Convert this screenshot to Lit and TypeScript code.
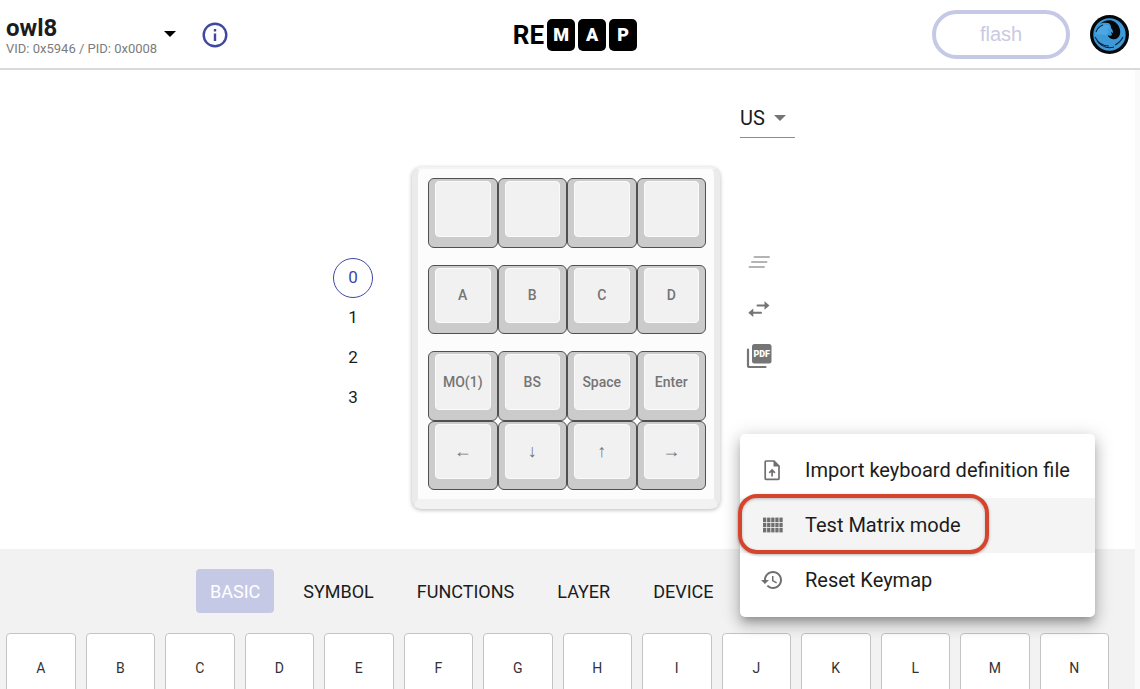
import { LitElement, html, css, svg } from "lit";
import { customElement, state } from "lit/decorators.js";
import { classMap } from "lit/directives/class-map.js";

const KEY_ROWS: { labels: string[]; spaced: boolean; arrows: boolean }[] = [
  { labels: ["", "", "", ""], spaced: false, arrows: false },
  { labels: ["A", "B", "C", "D"], spaced: true, arrows: false },
  { labels: ["MO(1)", "BS", "Space", "Enter"], spaced: true, arrows: false },
  { labels: ["←", "↓", "↑", "→"], spaced: false, arrows: true },
];
const TABS = ["BASIC", "SYMBOL", "FUNCTIONS", "LAYER", "DEVICE"];
const LETTERS = "ABCDEFGHIJKLMN".split("");

const fileIcon = svg`
  <path d="M6 3h8l5 5v12.500a.8.8 0 0 1-.8.800H6a.8.8 0 0 1-.8-.8V3.800A.8.8 0 0 1 6 3z" fill="none" stroke="currentColor" stroke-width="1.700"/>
  <path d="M13.500 2.500v6h6z" fill="currentColor"/>
  <path d="M12.100 18.500v-6M9.300 14.800l2.800-2.800 2.800 2.800" fill="none" stroke="currentColor" stroke-width="1.700"/>`;
const gridIcon = svg`${[0, 1, 2].map((r) =>
  [0, 1, 2, 3, 4].map((c) => svg`<rect x=${3 + c * 4.1} y=${4.6 + r * 5.2} width="3.300" height="4.400" fill="currentColor"/>`)
)}`;
const historyIcon = svg`
  <path d="M13 3c-4.970 0-9 4.030-9 9H1l3.890 3.890.07.14L9 12H6c0-3.870 3.130-7 7-7s7 3.130 7 7-3.130 7-7 7c-1.930 0-3.680-.79-4.940-2.060l-1.420 1.420C8.270 19.990 10.510 21 13 21c4.970 0 9-4.030 9-9s-4.030-9-9-9zm-1 5v5l4.280 2.540.72-1.210-3.500-2.080V8H12z" fill="currentColor"/>`;

@customElement("app-root")
export class AppRoot extends LitElement {
  @state() private layer = 0;
  @state() private tab = "BASIC";

  static styles = css`
    :host {
      display: flex;
      flex-direction: column;
      position: relative;
      height: 100vh;
      overflow: hidden;
      background: #fafafa;
      color: #1c1c1c;
      font-family: Roboto, "Noto Sans", sans-serif;
    }
    * { box-sizing: border-box; }
    button {
      font: inherit;
      color: inherit;
      border: 0;
      padding: 0;
      margin: 0;
      background: none;
      cursor: pointer;
    }
    svg { display: block; }
    header {
      display: grid;
      grid-template-columns: 1fr auto 1fr;
      align-items: center;
      height: 70px;
      flex: none;
      padding: 0 11px 0 6px;
      background: #fff;
      border-bottom: 2px solid #dadada;
    }
    .device { display: flex; align-items: center; }
    .picker { display: flex; align-items: center; gap: 7px; text-align: left; }
    .name { display: block; font-size: 24px; font-weight: 700; line-height: 28px; padding-top: 2px; }
    .ids { display: block; font-size: 13px; line-height: 14px; color: #7c7c7c; }
    .info { margin: 2px 0 0 26px; color: #3f48a0; }
    .logo { display: flex; align-items: center; gap: 3px; padding: 2px 0 0 15px; color: #000; }
    .logo-re {
      font-weight: 700;
      font-size: 26px;
      line-height: 32px;
    }
    .logo-cap {
      width: 28px;
      height: 32px;
      border-radius: 5px;
      background: #000;
      color: #fff;
      text-align: center;
      font-weight: 900;
      font-size: 18px;
      line-height: 32px;
    }
    .account { display: flex; align-items: center; justify-content: flex-end; gap: 20px; }
    .flash {
      width: 138px;
      height: 49px;
      border: 4px solid #c6c9e6;
      border-radius: 25px;
      color: #c8cae4;
      font-family: "Liberation Sans", Arial, sans-serif;
      font-size: 20px;
    }
    .content { flex: 1; display: flex; flex-direction: column; margin-right: 5px; }
    .stage {
      display: grid;
      grid-template-columns: 1fr 308px 1fr;
      padding: 28px 3px 40px 0;
      background: #fff;
    }
    .layers {
      display: flex;
      flex-direction: column;
      align-items: center;
      justify-self: end;
      margin: 160px 39px 0 0;
    }
    .layer { width: 40px; height: 40px; padding-bottom: 2px; border-radius: 50%; font-size: 17px; }
    .layer.on { border: 1px solid #3f48a0; color: #3f48a0; }
    .board {
      margin-top: 69px;
      padding: 9px 8px 9px 10px;
      border: solid #ebebeb;
      border-width: 2px 6px 10px;
      border-bottom-color: #f2f2f2;
      border-top-color: #f4f4f4;
      border-radius: 9px;
      background: #fcfcfc;
      box-shadow: 0 1px 4px rgba(0, 0, 0, 0.28);
    }
    .row { display: grid; grid-template-columns: repeat(4, 1fr); }
    .row.spaced { margin-top: 17px; }
    .key {
      display: flex;
      aspect-ratio: 1;
      padding: 2px 6px 10px;
      border: 1px solid #505050;
      border-radius: 6px;
      background: #cbcbcb;
      color: #757575;
      font-size: 14px;
      font-weight: 500;
    }
    .arrows .key { font-size: 18px; font-weight: 400; }
    .top {
      flex: 1;
      display: flex;
      align-items: center;
      justify-content: center;
      border: 1px solid #fafafa;
      border-radius: 4px;
      background: #f1f1f1;
    }
    .tools { display: flex; flex-direction: column; align-items: flex-start; margin-left: 20px; }
    .layout { display: grid; width: 55px; border-bottom: 1px solid #8c8c8c; align-items: center; }
    .layout select {
      grid-area: 1 / 1;
      appearance: none;
      height: 39px;
      border: 0;
      padding: 0;
      background: none;
      color: inherit;
      font: inherit;
      font-size: 20px;
    }
    .layout svg { grid-area: 1 / 1; justify-self: end; margin-right: 9px; pointer-events: none; }
    .actions { display: flex; flex-direction: column; margin-top: 100px; }
    .action { display: grid; place-items: center; width: 38px; height: 47px; color: #757575; }
    .action:disabled { color: #b4b4b4; }
    .palette { flex: 1; padding: 20px 26px 0 6px; background: #f2f2f2; }
    .tabs { display: flex; gap: 15px; padding-left: 190px; }
    .tab { height: 44px; padding: 0 14px; border-radius: 4px; font-size: 18px; }
    .tab.on { background: #c6c9e6; color: #fff; }
    .letters { display: grid; grid-template-columns: repeat(14, 1fr); gap: 10px; margin-top: 20px; }
    .letter {
      height: 70px;
      border: 1px solid #c4c4c4;
      border-radius: 4px;
      background: #fff;
      font-size: 14px;
      color: #333;
    }
    .menu {
      position: absolute;
      top: 434px;
      right: 45px;
      width: 355px;
      padding: 9px 0;
      border-radius: 5px;
      background: #fff;
      box-shadow: 0 6px 7px -3px rgba(0, 0, 0, 0.22), 0 8px 14px 1px rgba(0, 0, 0, 0.16),
        0 3px 18px 3px rgba(0, 0, 0, 0.13);
    }
    .item {
      display: flex;
      align-items: center;
      gap: 21px;
      width: 100%;
      height: 55px;
      padding: 0 0 2px 20px;
      font-size: 20px;
      white-space: nowrap;
    }
    .item svg { color: #6f6f6f; }
    .item.on { background: #f4f4f4; }
    .callout {
      position: absolute;
      top: 60px;
      left: -2px;
      width: 251px;
      height: 60px;
      border: 4px solid #d4452e;
      border-radius: 19px;
      box-shadow: 0 1px 3px rgba(0, 0, 0, 0.3), inset 0 1px 3px rgba(0, 0, 0, 0.25);
      pointer-events: none;
    }
  `;

  private header() {
    return html`<header>
      <div class="device">
        <button class="picker">
          <span><span class="name">owl8</span><span class="ids">VID: 0x5946 / PID: 0x0008</span></span>
          <svg width="12" height="6" viewBox="0 0 12 6"><path d="M0 0h12L6 6z" /></svg>
        </button>
        <button class="info" aria-label="Information">
          <svg width="26" height="26" viewBox="0 0 26 26" fill="none" stroke="currentColor" stroke-width="2.400">
            <circle cx="13" cy="13" r="11.300" />
            <path d="M13 11.500v7.500M13 7v2.500" />
          </svg>
        </button>
      </div>
      <div class="logo" role="img" aria-label="REMAP">
        <span class="logo-re">RE</span>
        ${["M", "A", "P"].map((c) => html`<span class="logo-cap">${c}</span>`)}
      </div>
      <div class="account">
        <button class="flash" disabled>flash</button>
        <button aria-label="Account">
          <svg width="39" height="39" viewBox="0 0 39 39">
            <circle cx="19.500" cy="19.500" r="19.500" fill="#05070b" />
            <circle cx="19.500" cy="19.500" r="16.200" fill="#3d9ad8" />
            <path d="M10 9c4-4 11-5 15-2 4 3 6 8 5 12-1 4-4 6-8 5-2-.5-4-2-4-4 1 1 3 1 4 0l-1-3 2 1c0-2-.5-4-2-5 0-3-1-5-4-5-3-.5-5 0-7 1z" fill="#05070b" />
            <path d="M6 19c0-4 3-8 8-9 3-1 5 0 7 3l-4 1 2 3-3 3c-4 0-7-1-10-1z" fill="#4ba6e2" />
            <path d="M5 22c3 6 8 9 14 9M7 26c4 5 10 8 17 6M6 17c1-3 4-6 7-7M25 30c4-2 6-4 8-8" fill="none" stroke="#0a2440" stroke-width="1.100" />
          </svg>
        </button>
      </div>
    </header>`;
  }

  private stage() {
    return html`<section class="stage">
      <div class="layers">
        ${[0, 1, 2, 3].map(
          (n) => html`<button class=${classMap({ layer: true, on: n === this.layer })} @click=${() => (this.layer = n)}>${n}</button>`
        )}
      </div>
      <div class="board">
        ${KEY_ROWS.map(
          (row) => html`<div class=${classMap({ row: true, spaced: row.spaced, arrows: row.arrows })}>
            ${row.labels.map((l) => html`<button class="key" aria-label=${l || "Empty key"}><span class="top">${l}</span></button>`)}
          </div>`
        )}
      </div>
      <div class="tools">
        <label class="layout">
          <select aria-label="Keyboard layout"><option>US</option></select>
          <svg width="12" height="6" viewBox="0 0 12 6"><path d="M0 0h12L6 6z" fill="#757575" /></svg>
        </label>
        <div class="actions">
          <button class="action" disabled aria-label="Clear all changes">
            <svg width="24" height="16" viewBox="0 0 24 16" stroke="currentColor" stroke-width="2" stroke-linecap="round">
              <path d="M7.500 3h14.500M5 8h14.500M2.500 13h14.500" />
            </svg>
          </button>
          <button class="action" aria-label="Keymap diff">
            <svg width="24" height="18" viewBox="0 0 24 18" fill="currentColor">
              <path d="M10.500 4.500h7V1.300l5 4.200-5 4.200V6.500h-7a1 1 0 0 1 0-2zM14 11.700H6.300V8.600l-5 4.100 5 4.200v-3.200H14a1 1 0 0 0 0-2z" />
            </svg>
          </button>
          <button class="action" aria-label="Download PDF">
            <svg width="26" height="26" viewBox="0 0 26 26">
              <rect x="6" y="1" width="19.500" height="19.500" rx="2.500" fill="currentColor" />
              <path d="M2 6.500v16a1.500 1.500 0 0 0 1.500 1.500h16" fill="none" stroke="currentColor" stroke-width="2.200" stroke-linecap="round" />
              <text x="15.700" y="14" text-anchor="middle" fill="#fff" font-family="Roboto" font-size="9" font-weight="900">PDF</text>
            </svg>
          </button>
        </div>
      </div>
    </section>`;
  }

  private menuItem(icon: unknown, label: string, on = false) {
    return html`<button role="menuitem" class=${classMap({ item: true, on })}>
      <svg width="24" height="24" viewBox="0 0 24 24">${icon}</svg>${label}
    </button>`;
  }

  render() {
    return html`
      ${this.header()}
      <main class="content">
        ${this.stage()}
        <section class="palette">
          <nav class="tabs">
            ${TABS.map(
              (t) => html`<button class=${classMap({ tab: true, on: t === this.tab })} @click=${() => (this.tab = t)}>${t}</button>`
            )}
          </nav>
          <div class="letters">${LETTERS.map((l) => html`<button class="letter">${l}</button>`)}</div>
        </section>
      </main>
      <div class="menu" role="menu">
        ${this.menuItem(fileIcon, "Import keyboard definition file")}
        ${this.menuItem(gridIcon, "Test Matrix mode", true)}
        ${this.menuItem(historyIcon, "Reset Keymap")}
        <div class="callout"></div>
      </div>
    `;
  }
}
